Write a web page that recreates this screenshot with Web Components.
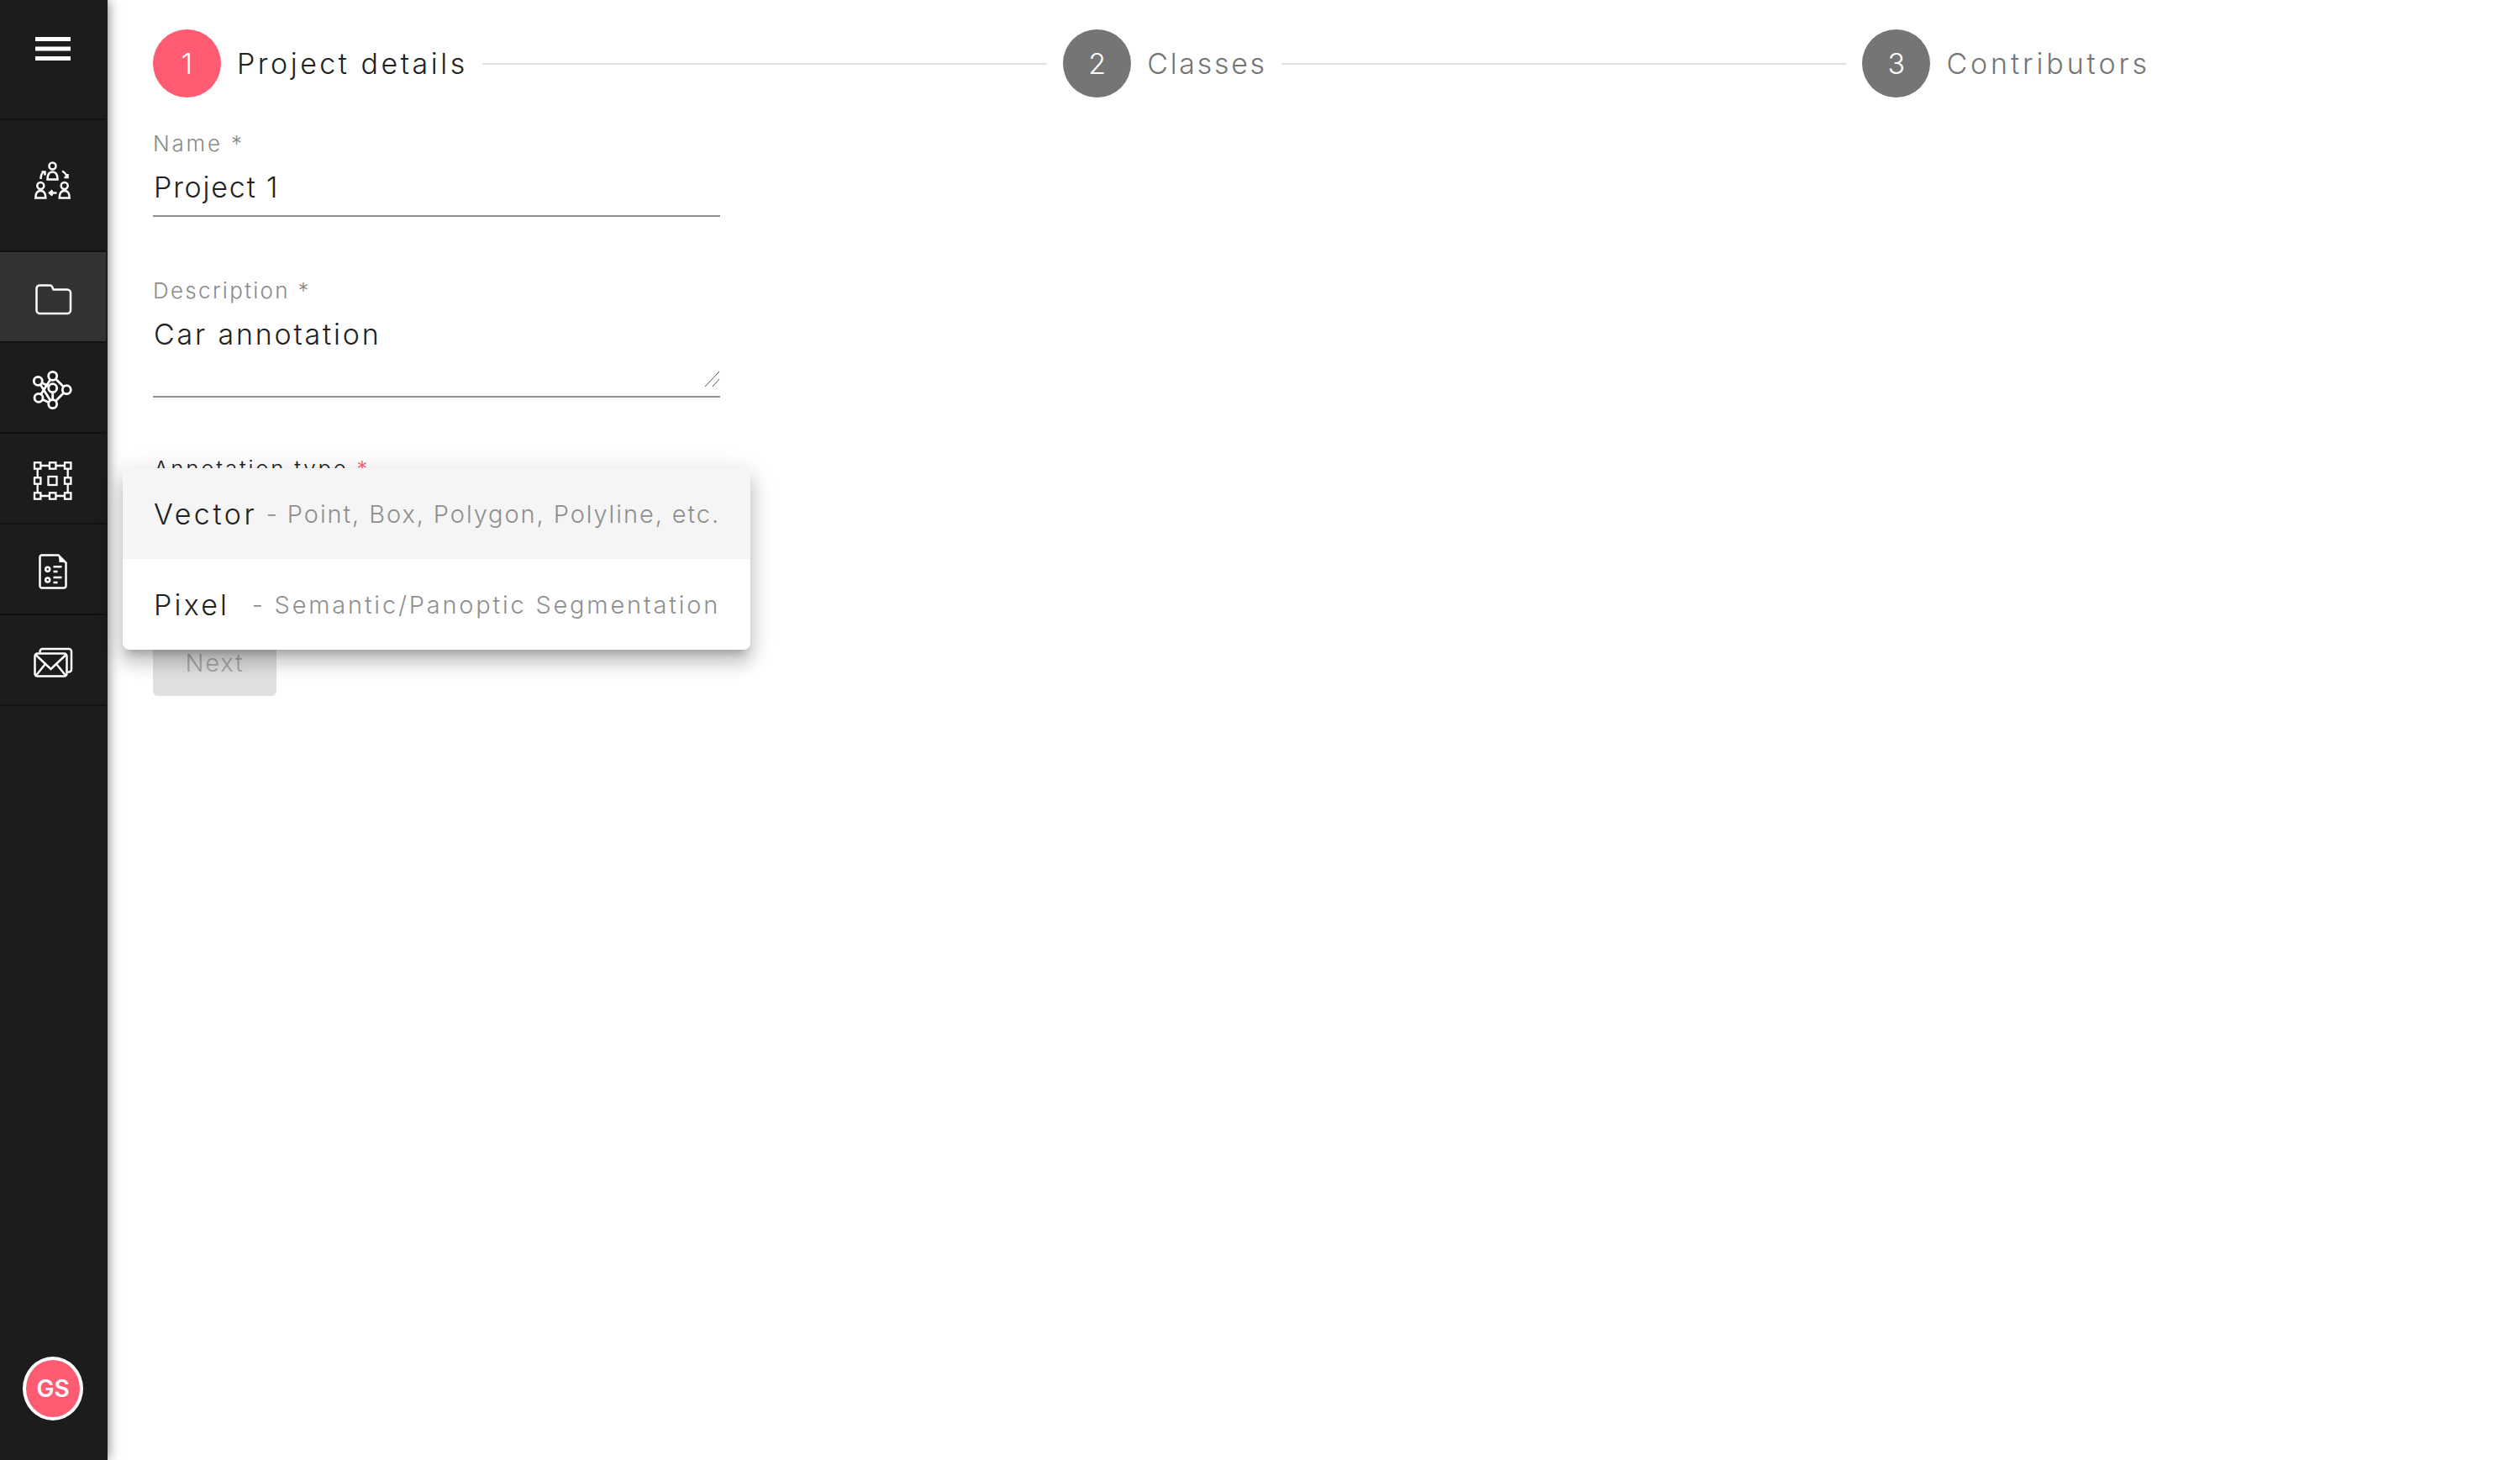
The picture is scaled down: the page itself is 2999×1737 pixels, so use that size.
<!DOCTYPE html>
<html lang="en">
<head>
<meta charset="utf-8">
<title>Project details</title>
<style>
  html, body { margin: 0; height: 100%; background: #fff; overflow: hidden; }
  body { font-family: Inter, "Noto Sans", sans-serif; font-weight: 300; color: #212121; }
  .page { display: flex; height: 100vh; }
  .main { flex: 1; padding: 35px 440px 0 54px; display: flex; flex-direction: column; gap: 40px; min-width: 0; }
  .form { display: flex; flex-direction: column; gap: 73px; width: 675px; }
</style>
</head>
<body>
<div class="page">
  <nav-rail>
    <rail-item height="141" align="start">
      <svg viewBox="18 13 90 90" width="90" height="90" fill="#fff"><rect x="42" y="44" width="42" height="5"/><rect x="42" y="55.500" width="42" height="5"/><rect x="42" y="67" width="42" height="5"/></svg>
    </rail-item>
    <rail-item height="155">
      <svg viewBox="-2 5 90 90" width="90" height="90" fill="none" stroke="#fff" stroke-width="2.500">
        <circle cx="42.500" cy="26.500" r="4"/><path d="M36.500 42.500c0-6 2.500-9 6-9s6 3 6 9z"/>
        <circle cx="28.300" cy="50" r="4"/><path d="M22.300 64.500c0-6 2.500-8.500 6-8.500s6 2.500 6 8.500z"/>
        <circle cx="56.700" cy="50" r="4"/><path d="M50.700 64.500c0-6 2.500-8.500 6-8.500s6 2.500 6 8.500z"/>
        <path d="M28.500 42c0-4 1-7 3.500-8.500M29.500 33.500h4v4M54 32.500c3 1.500 5 4 6 8M56.500 40h4v-4M47.500 58.500h-8.500M42.500 55.500l-3.500 3 3.500 3"/>
      </svg>
    </rail-item>
    <rail-item height="106" active>
      <svg viewBox="18 308 90 90" width="90" height="90" fill="none" stroke="#fff" stroke-width="2.500"><path d="M47.500 339.500h12a3 3 0 0 1 2.500 1.500l1.500 3.500h16.500a4 4 0 0 1 4 4v20.500a4 4 0 0 1-4 4h-32.500a4 4 0 0 1-4-4v-26a4 4 0 0 1 4-3.500z"/></svg>
    </rail-item>
    <rail-item height="106">
      <svg viewBox="-2 -4 90 90" width="90" height="90" fill="none" stroke="#fff" stroke-width="2.800">
        <path d="M42.700 27.300 59.300 43.700 42.700 60.700V41.700M25.300 33.300 42.700 60.700M42.700 27.300 26 53.300 42.700 60.700M25.300 33.300 42.700 41.700"/>
        <g fill="#1c1c1c"><circle cx="42.700" cy="27.300" r="5"/><circle cx="25.300" cy="33.300" r="5"/><circle cx="42.700" cy="41.700" r="5"/><circle cx="59.300" cy="43.700" r="5"/><circle cx="26" cy="53.300" r="5"/><circle cx="42.700" cy="60.700" r="5"/></g>
      </svg>
    </rail-item>
    <rail-item height="106">
      <svg viewBox="-2 -6 90 90" width="90" height="90" fill="none" stroke="#fff" stroke-width="2.300">
        <path d="M24.700 24H60.700V60H24.700z"/>
        <g fill="#1c1c1c"><rect x="21" y="20.300" width="7.400" height="7.400"/><rect x="39" y="20.300" width="7.400" height="7.400"/><rect x="57" y="20.300" width="7.400" height="7.400"/><rect x="21" y="38.300" width="7.400" height="7.400"/><rect x="57" y="38.300" width="7.400" height="7.400"/><rect x="21" y="56.300" width="7.400" height="7.400"/><rect x="39" y="56.300" width="7.400" height="7.400"/><rect x="57" y="56.300" width="7.400" height="7.400"/><rect x="37.500" y="37" width="10" height="10"/></g>
      </svg>
    </rail-item>
    <rail-item height="106">
      <svg viewBox="-2 -8 90 90" width="90" height="90" fill="none" stroke="#fff" stroke-width="2.500">
        <path d="M30 20.500H49.500L58.500 29.500V57a2.500 2.500 0 0 1-2.500 2.500H30a2.500 2.500 0 0 1-2.500-2.500V23a2.500 2.500 0 0 1 2.500-2.500z"/>
        <path d="M50 21 50.500 29H58" fill="#fff" stroke="none"/>
        <circle cx="36.700" cy="37.300" r="2.500"/><circle cx="36.700" cy="50" r="2.500"/>
        <path d="M43.500 34.300H53.500M43.500 40H48.500M43.500 47H53.500M43.500 53H48.500"/>
      </svg>
    </rail-item>
    <rail-item height="106">
      <svg viewBox="-2 -10 90 90" width="90" height="90" fill="none" stroke="#fff" stroke-width="2.500">
        <path d="M27.500 26.500V25a3 3 0 0 1 3-3H62a3 3 0 0 1 3 3V46.500a3 3 0 0 1-3 3H60.500"/>
        <rect x="21.500" y="27.500" width="38" height="27" rx="3"/>
        <path d="M22.500 29 40.500 46 58.500 29M23 53.500 33.500 40.500M58 53.500 47.500 40.500"/>
      </svg>
    </rail-item>
    <user-avatar slot="foot">GS</user-avatar>
  </nav-rail>

  <main class="main">
    <step-bar>
      <step-item num="1" spacing="3.5" active>Project details</step-item>
      <step-item num="2" spacing="2.7">Classes</step-item>
      <step-item num="3" spacing="3.9">Contributors</step-item>
    </step-bar>
    <div class="form">
      <text-field label="Name" spacing="1.8" label-spacing="2.8" pad="11">Project 1</text-field>
      <text-field label="Description" spacing="2.8" label-spacing="2.3" pad="51" multiline>Car annotation</text-field>
      <type-select label="Annotation type">
        <type-option name="Vector" name-spacing="3.5" desc-spacing="1.9" desc="- Point, Box, Polygon, Polyline, etc." highlighted></type-option>
        <type-option name="Pixel" name-spacing="3.2" desc-spacing="2.78" desc="- Semantic/Panoptic Segmentation"></type-option>
      </type-select>
    </div>
    <next-button>Next</next-button>
  </main>
</div>

<script>
  class NavRail extends HTMLElement {
    constructor() {
      super();
      this.attachShadow({ mode: 'open' });
      this.shadowRoot.innerHTML = `
        <style>
          :host {
            display: flex;
            flex-direction: column;
            flex: none;
            width: 126px;
            padding-right: 2px;
            height: 100vh;
            background: #1c1c1c;
            box-shadow: 0 0 14px rgba(0, 0, 0, 0.55);
            position: relative;
            z-index: 2;
          }
          .items { flex: 1; }
          .foot { display: flex; justify-content: center; padding-bottom: 47px; }
        </style>
        <div class="items"><slot></slot></div>
        <div class="foot"><slot name="foot"></slot></div>
      `;
    }
  }

  class RailItem extends HTMLElement {
    constructor() {
      super();
      this.attachShadow({ mode: 'open' });
      this.shadowRoot.innerHTML = `
        <style>
          :host {
            display: flex;
            justify-content: center;
            align-items: center;
            border-bottom: 2px solid #111;
          }
          :host([active]) { background: #333; }
          :host([align="start"]) { align-items: flex-start; }
          ::slotted(svg) { display: block; }
          :host([align="start"]) ::slotted(svg) { margin-top: 13px; }
        </style>
        <slot></slot>
      `;
    }

    connectedCallback() {
      this.style.height = this.getAttribute('height') + 'px';
    }
  }

  class UserAvatar extends HTMLElement {
    constructor() {
      super();
      this.attachShadow({ mode: 'open' });
      this.shadowRoot.innerHTML = `
        <style>
          :host {
            display: flex;
            align-items: center;
            justify-content: center;
            box-sizing: border-box;
            width: 72px;
            height: 76px;
            border: 4px solid #fff;
            border-radius: 50%;
            background: #ff5c74;
            color: #fff;
            font-size: 28px;
            font-weight: 600;
          }
        </style>
        <slot></slot>
      `;
    }
  }

  class StepBar extends HTMLElement {
    constructor() {
      super();
      this.attachShadow({ mode: 'open' });
      this.shadowRoot.innerHTML = `
        <style>
          :host { display: flex; align-items: center; }
        </style>
        <slot></slot>
      `;
    }
  }

  class StepItem extends HTMLElement {
    constructor() {
      super();
      this.attachShadow({ mode: 'open' });
      const num = this.getAttribute('num');
      const first = num === '1';
      this.shadowRoot.innerHTML = `
        <style>
          :host { display: flex; align-items: center; flex: ${first ? '0 0 auto' : '1 1 auto'}; }
          .line { flex: 1; height: 2px; background: #e0e0e0; margin: 0 19px 0 17px; }
          .dot {
            flex: none;
            width: 81px;
            height: 81px;
            border-radius: 50%;
            background: #757575;
            color: #fff;
            display: flex;
            align-items: center;
            justify-content: center;
            font-size: 34px;
          }
          .text {
            margin-left: 19px;
            font-size: 34px;
            letter-spacing: ${this.getAttribute('spacing')}px;
            color: #757575;
            white-space: nowrap;
          }
          :host([active]) .dot { background: #ff5c74; }
          :host([active]) .text { color: #212121; }
        </style>
        ${first ? '' : '<div class="line"></div>'}
        <div class="dot">${num}</div>
        <div class="text"><slot></slot></div>
      `;
    }
  }

  class TextField extends HTMLElement {
    constructor() {
      super();
      this.attachShadow({ mode: 'open' });
      const pad = this.getAttribute('pad');
      this.shadowRoot.innerHTML = `
        <style>
          :host { display: block; position: relative; }
          .label {
            font-size: 26px;
            line-height: 30px;
            letter-spacing: ${this.getAttribute('label-spacing')}px;
            color: #8a8a8a;
          }
          .value {
            font-size: 34px;
            line-height: 44px;
            letter-spacing: ${this.getAttribute('spacing')}px;
            margin-top: 15px;
            padding: 0 1px ${pad}px;
            border-bottom: 2px solid #8f8f8f;
          }
          svg { position: absolute; right: 0; bottom: 12px; }
        </style>
        <div class="label">${this.getAttribute('label')} *</div>
        <div class="value"><slot></slot></div>
        ${this.hasAttribute('multiline') ? `<svg width="20" height="20" viewBox="0 0 20 20" stroke="#555" fill="none"><path d="M2 19 19 1M11 19 19 10"/></svg>` : ''}
      `;
    }
  }

  class TypeSelect extends HTMLElement {
    constructor() {
      super();
      this.attachShadow({ mode: 'open' });
      this.shadowRoot.innerHTML = `
        <style>
          :host { display: block; position: relative; height: 175px; margin-top: -3px; }
          .label { font-size: 26px; line-height: 30px; letter-spacing: 2.7px; color: #212121; padding-left: 1px; }
          .label span { color: #ff5c74; }
          .menu {
            position: absolute;
            top: 14px;
            left: -36px;
            width: 747px;
            background: #fff;
            border-radius: 8px;
            overflow: hidden;
            box-shadow: 0 10px 10px -6px rgba(0, 0, 0, 0.2), 0 16px 20px 2px rgba(0, 0, 0, 0.14), 0 6px 28px 4px rgba(0, 0, 0, 0.12);
            z-index: 3;
          }
        </style>
        <div class="label">Annotation type <span>*</span></div>
        <div class="menu"><slot></slot></div>
      `;
    }
  }

  class TypeOption extends HTMLElement {
    constructor() {
      super();
      this.attachShadow({ mode: 'open' });
      this.shadowRoot.innerHTML = `
        <style>
          :host {
            display: flex;
            align-items: center;
            justify-content: space-between;
            height: 108px;
            padding: 0 36px 0 37px;
            white-space: nowrap;
          }
          :host([highlighted]) { background: #f5f5f5; }
          .name { font-size: 34px; letter-spacing: ${this.getAttribute('name-spacing')}px; color: #212121; }
          .desc { font-size: 29px; letter-spacing: ${this.getAttribute('desc-spacing')}px; color: #8f8f8f; }
        </style>
        <span class="name">${this.getAttribute('name')}</span>
        <span class="desc">${this.getAttribute('desc')}</span>
      `;
    }
  }

  class NextButton extends HTMLElement {
    constructor() {
      super();
      this.attachShadow({ mode: 'open' });
      this.shadowRoot.innerHTML = `
        <style>
          :host {
            display: flex;
            align-items: center;
            justify-content: center;
            align-self: flex-start;
            box-sizing: border-box;
            width: 147px;
            height: 70px;
            padding-bottom: 10px;
            border-radius: 6px;
            background: #e0e0e0;
            color: #a6a6a6;
            font-size: 29px;
            letter-spacing: 1.800px;
          }
        </style>
        <slot></slot>
      `;
    }
  }

  customElements.define('nav-rail', NavRail);
  customElements.define('rail-item', RailItem);
  customElements.define('user-avatar', UserAvatar);
  customElements.define('step-bar', StepBar);
  customElements.define('step-item', StepItem);
  customElements.define('text-field', TextField);
  customElements.define('type-select', TypeSelect);
  customElements.define('type-option', TypeOption);
  customElements.define('next-button', NextButton);
</script>
</body>
</html>
